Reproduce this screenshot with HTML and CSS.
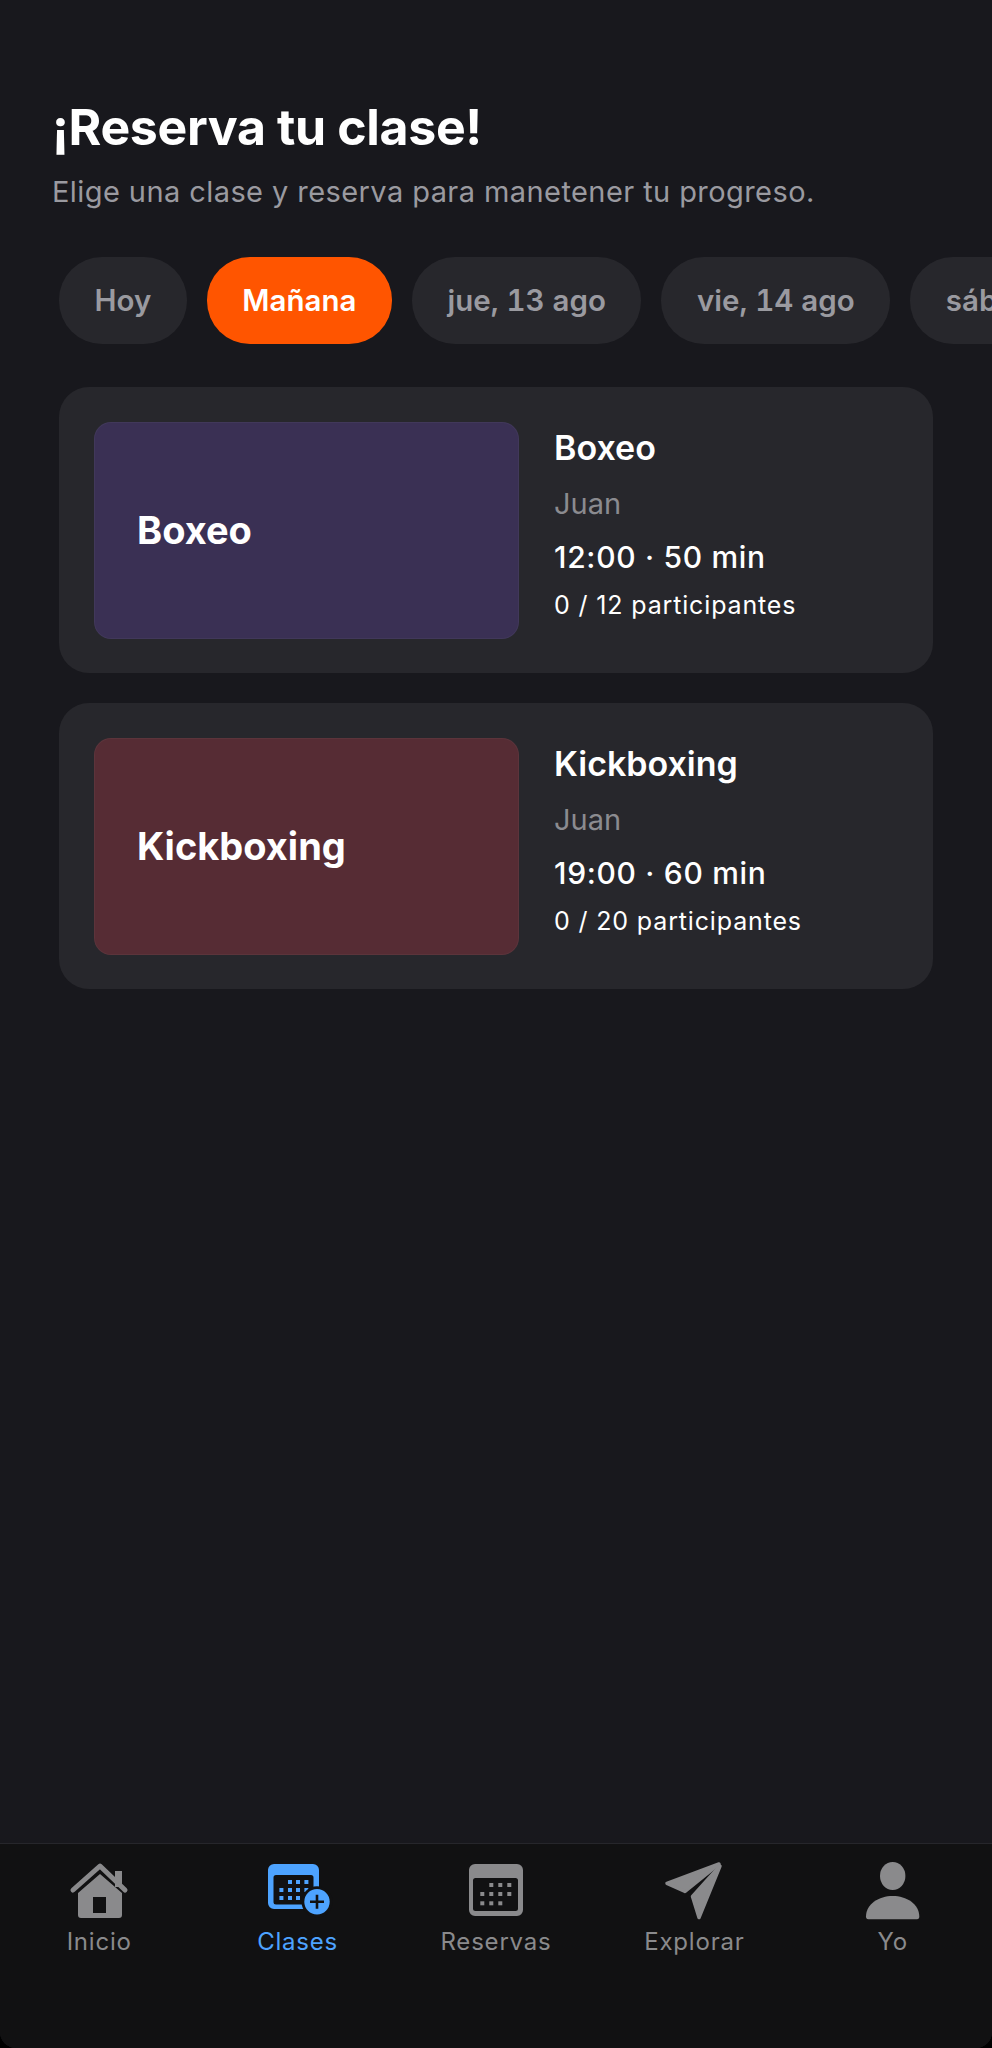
FILE: index.html
```html
<!DOCTYPE html>
<html lang="es">
<head>
  <meta charset="UTF-8" />
  <meta name="viewport" content="width=device-width, initial-scale=1.0"/>
  <title>Reserva tu clase</title>
  <link rel="stylesheet" href="styles.css">
</head>
<body>
  <div class="app">
    <main class="content">
      <div class="header">
        <h1>¡Reserva tu clase!</h1>
        <p>Elige una clase y reserva para manetener tu progreso.</p>
      </div>

      <div class="days">
        <div class="day">Hoy</div>
        <div class="day active">Mañana</div>
        <div class="day">jue, 13 ago</div>
        <div class="day">vie, 14 ago</div>
        <div class="day">sáb, 15 ago</div>
      </div>

      <div class="class-list">
        <div class="class-card">
          <div class="thumb thumb-boxeo">Boxeo</div>
          <div class="info">
            <div class="name">Boxeo</div>
            <div class="coach">Juan</div>
            <div class="time">12:00 · 50 min</div>
            <div class="spots">0 / 12 participantes</div>
          </div>
        </div>
        <div class="class-card">
          <div class="thumb thumb-kick">Kickboxing</div>
          <div class="info">
            <div class="name">Kickboxing</div>
            <div class="coach">Juan</div>
            <div class="time">19:00 · 60 min</div>
            <div class="spots">0 / 20 participantes</div>
          </div>
        </div>
      </div>
    </main>

    <nav class="tabbar">
      <div class="tab">
        <svg viewBox="0 0 80 60" class="icon">
          <rect x="56" y="11" width="7" height="16" fill="#8a8a8c"/>
          <path d="M14 30 41 6 66 30" fill="none" stroke="#8a8a8c" stroke-width="5" stroke-linecap="round" stroke-linejoin="round"/>
          <path fill-rule="evenodd" fill="#8a8a8c" d="M41 14 63 33V55a3 3 0 0 1-3 3H22a3 3 0 0 1-3-3V33ZM34 37V53H47V37Z"/>
        </svg>
        <span>Inicio</span>
      </div>
      <div class="tab tab-active">
        <svg viewBox="0 0 80 60" class="icon">
          <path fill-rule="evenodd" fill="#4da3ff" d="M16 4H55a6 6 0 0 1 6 6V43a6 6 0 0 1-6 6H16a6 6 0 0 1-6-6V10a6 6 0 0 1 6-6ZM18 15a2.500 2.500 0 0 0-2.500 2.500V42a2.500 2.500 0 0 0 2.500 2.500H53a2.500 2.500 0 0 0 2.500-2.500V17.500A2.500 2.500 0 0 0 53 15Z"/>
          <g fill="#4da3ff">
            <rect x="30" y="20" width="4" height="4"/><rect x="38" y="20" width="4" height="4"/><rect x="46.400" y="20" width="4" height="4"/>
            <rect x="21.400" y="28" width="4" height="4"/><rect x="30" y="28" width="4" height="4"/><rect x="38" y="28" width="4" height="4"/><rect x="46.400" y="28" width="4" height="4"/>
            <rect x="21.400" y="36" width="4" height="4"/><rect x="30" y="36" width="4" height="4"/><rect x="38" y="36" width="4" height="4"/>
          </g>
          <circle cx="59" cy="41.700" r="15.500" fill="#111112"/>
          <circle cx="59" cy="41.700" r="12.700" fill="#4da3ff"/>
          <path d="M52 41.700H66M59 34.700V48.700" stroke="#111112" stroke-width="2.600"/>
        </svg>
        <span>Clases</span>
      </div>
      <div class="tab">
        <svg viewBox="0 0 80 60" class="icon">
          <path fill-rule="evenodd" fill="#8a8a8c" d="M19 4H61a6 6 0 0 1 6 6V50a6 6 0 0 1-6 6H19a6 6 0 0 1-6-6V10a6 6 0 0 1 6-6ZM19.500 18a2.500 2.500 0 0 0-2.500 2.500V48.500a2.500 2.500 0 0 0 2.500 2.500H59.500a2.500 2.500 0 0 0 2.500-2.500V20.500A2.500 2.500 0 0 0 59.500 18Z"/>
          <g fill="#8a8a8c">
            <rect x="33.300" y="23" width="4" height="4"/><rect x="42.300" y="23" width="4" height="4"/><rect x="51.300" y="23" width="4" height="4"/>
            <rect x="24.300" y="32" width="4" height="4"/><rect x="33.300" y="32" width="4" height="4"/><rect x="42.300" y="32" width="4" height="4"/><rect x="51.300" y="32" width="4" height="4"/>
            <rect x="24.300" y="41.300" width="4" height="4"/><rect x="33.300" y="41.300" width="4" height="4"/><rect x="42.300" y="41.300" width="4" height="4"/>
          </g>
        </svg>
        <span>Reservas</span>
      </div>
      <div class="tab">
        <svg viewBox="0 0 80 60" class="icon">
          <g fill="#8a8a8c" stroke="#8a8a8c" stroke-width="3.500" stroke-linejoin="round">
            <path d="M65 4 13 23.500 31 31.500Z"/>
            <path d="M66 6 38.500 36.500 45 57.500Z"/>
          </g>
        </svg>
        <span>Explorar</span>
      </div>
      <div class="tab">
        <svg viewBox="0 0 80 60" class="icon">
          <ellipse cx="39.700" cy="16" rx="12.700" ry="14" fill="#8a8a8c"/>
          <path fill="#8a8a8c" d="M13 56.500C13 44 26 36 39.700 36S66.300 44 66.300 56.500Q66.300 59.300 64 59.300H15.300Q13 59.300 13 56.500Z"/>
        </svg>
        <span>Yo</span>
      </div>
    </nav>
  </div>
</body>
</html>
```

FILE: styles.css
```css
* {
  box-sizing: border-box;
}

body {
  margin: 0;
  background-color: #000;
  font-family: Inter, 'Noto Sans', sans-serif;
  color: #fff;
}

.app {
  display: flex;
  flex-direction: column;
  width: 992px;
  height: 2048px;
  overflow: hidden;
  border-radius: 0 0 16px 16px;
  background-color: #18181d;
}

.content {
  flex: 1;
  min-height: 0;
}

.header {
  padding: 97px 52px 0;
}

.header h1 {
  margin: 0;
  font-size: 50px;
  line-height: 60px;
  font-weight: 700;
  letter-spacing: -0.35px;
}

.header p {
  margin: 16px 0 0;
  font-size: 29px;
  line-height: 38px;
  letter-spacing: 0.42px;
  color: #9a9aa0;
}

.days {
  display: flex;
  gap: 20px;
  margin-top: 46px;
  padding-left: 59px;
  overflow: hidden;
}

.day {
  flex: none;
  height: 87px;
  padding: 0 35.5px;
  border-radius: 43px;
  background-color: #27272c;
  color: #9a9aa0;
  font-size: 29.5px;
  font-weight: 600;
  line-height: 87px;
  font-variant-numeric: tabular-nums;
}

.day.active {
  background-color: #ff5500;
  color: #fff;
}

.class-list {
  display: flex;
  flex-direction: column;
  gap: 30px;
  margin: 43px 59px 0;
}

.class-card {
  display: flex;
  align-items: center;
  gap: 35px;
  height: 286px;
  padding: 0 35px;
  border-radius: 30px;
  background-color: #27272c;
}

.thumb {
  display: flex;
  align-items: center;
  flex: none;
  width: 425px;
  height: 217px;
  padding-left: 42px;
  border: 1px solid rgba(255, 255, 255, 0.04);
  border-radius: 17px;
  font-size: 38px;
  font-weight: 700;
}

.thumb-boxeo {
  background-color: #3a3054;
}

.thumb-kick {
  background-color: #562c34;
}

.info {
  padding-bottom: 12px;
}

.name {
  font-size: 34px;
  line-height: 44px;
  font-weight: 600;
}

.coach {
  margin-top: 14px;
  font-size: 29px;
  line-height: 40px;
  color: #8b8b90;
}

.time {
  margin-top: 13px;
  font-size: 30px;
  line-height: 40px;
  font-weight: 500;
  letter-spacing: 0.7px;
}

.spots {
  margin-top: 11px;
  font-size: 25px;
  line-height: 34px;
  letter-spacing: 0.85px;
}

.tabbar {
  display: flex;
  flex: none;
  height: 205px;
  padding-top: 16px;
  border-top: 1px solid #26262b;
  background-color: #111112;
}

.tab {
  display: flex;
  flex: 1;
  flex-direction: column;
  align-items: center;
  color: #8a8a8c;
  font-size: 24px;
  line-height: 34px;
  letter-spacing: 0.8px;
}

.tab-active {
  color: #4da3ff;
}

.icon {
  display: block;
  width: 80px;
  height: 60px;
  margin-bottom: 5px;
}
```
